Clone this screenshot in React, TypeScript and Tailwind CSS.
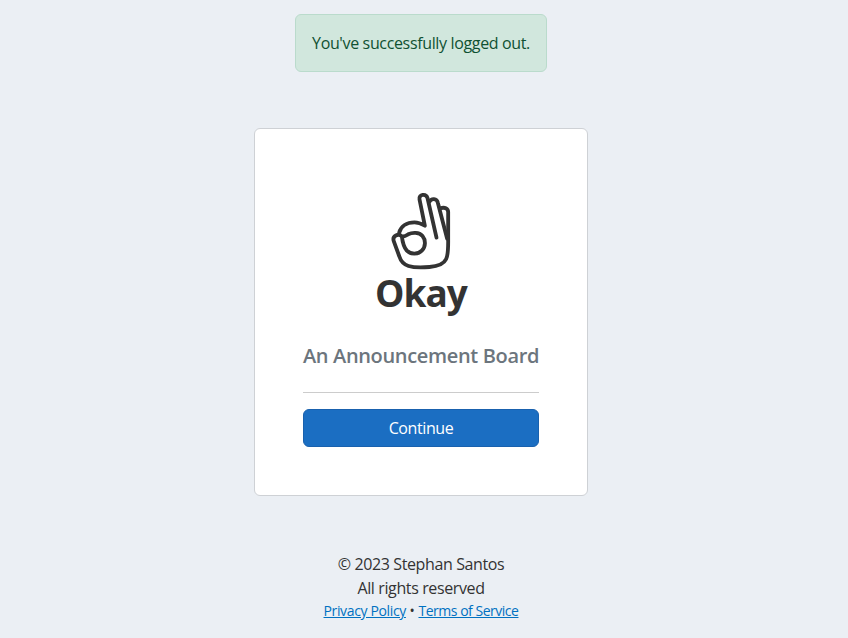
function OkayHand() {
  return (
    <svg
      className="block h-[90px] w-[84px] shrink-0"
      viewBox="-1.5 -1 252 270"
      fill="none"
      stroke="#333333"
      strokeWidth="11.5"
      strokeLinecap="round"
      strokeLinejoin="round"
      aria-hidden="true"
    >
      <path d="M59 142C64 122 82 111 105 111C117 111 126 115 136 121L120 42C117 26 140 24 144 38L171 157" />
      <path d="M149 50C156 37 172 39 175 52L203 160" />
      <path d="M183 69C195 64 206 70 206 80V170C206 197 205 211 200 221C193 236 176 243 150 245C128 247 103 247 87 242C71 237 64 228 59 212L43 168C37 151 57 143 67 153C69 170 71 184 82 196C94 208 115 208 127 196C139 184 139 164 129 152C119 140 98 141 86 147C78 152 73 155 67 153" />
    </svg>
  );
}

export default function App() {
  return (
    <div className="h-[638px] overflow-hidden bg-[#ebeff4] pr-[6px] font-['Open_Sans','Noto_Sans',sans-serif] text-base leading-6 text-[#333333]">
      <div className="flex flex-col items-center pt-3.5">
        <div
          role="alert"
          className="flex h-[58px] w-[252px] items-center justify-center rounded-md border border-[#badbcc] bg-[#d1e7dd] whitespace-nowrap text-[#0f5132]"
        >
          <span className="tracking-[-0.35px]">You've successfully logged out.</span>
        </div>

        <main className="mt-14 flex h-[368px] w-[334px] flex-col items-center rounded-md border border-[#ced1d5] bg-white px-12 pt-14">
          <OkayHand />
          <h1 className="mt-[-5px] text-[37px] leading-[46px] font-bold tracking-[-1px]">Okay</h1>
          <h2 className="mt-7 text-xl leading-6 font-semibold tracking-[-0.34px] whitespace-nowrap text-[#6c757d]">
            An Announcement Board
          </h2>
          <hr className="mt-6 w-full border-[#cccccc]" />
          <button
            type="button"
            className="mt-4 flex h-[38px] w-full shrink-0 items-center justify-center rounded-md border border-[#1961ae] bg-[#1b6ec2] tracking-[-0.4px] text-white"
          >
            Continue
          </button>
        </main>

        <footer className="mt-14 text-center tracking-[-0.38px] whitespace-nowrap">
          <p>© 2023 Stephan Santos</p>
          <p>All rights reserved</p>
          <p className="text-sm leading-[22px]">
            <a href="#privacy" className="tracking-[-0.36px] text-[#0071c1] underline">Privacy Policy</a>
            <span className="tracking-normal">{" • "}</span>
            <a href="#terms" className="tracking-[-0.48px] text-[#0071c1] underline">Terms of Service</a>
          </p>
        </footer>
      </div>
    </div>
  );
}
